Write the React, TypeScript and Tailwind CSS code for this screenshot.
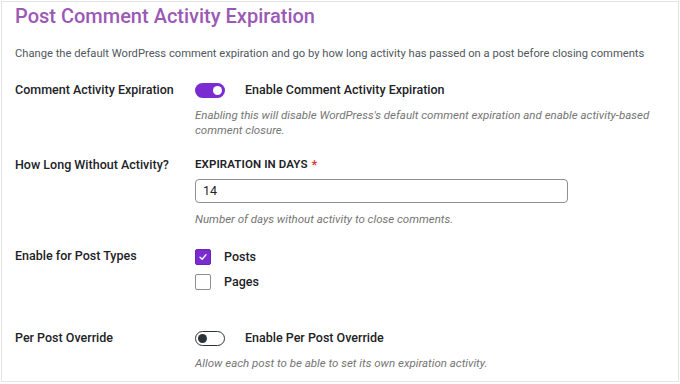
import React from "react";

function Toggle({ on }: { on: boolean }) {
  return on ? (
    <div className="w-[30px] h-[15px] rounded-full bg-[#7b2cd1] flex items-center justify-end pr-[3px]">
      <div className="w-[9px] h-[9px] rounded-full bg-white" />
    </div>
  ) : (
    <div className="w-[30px] h-[15px] rounded-full border border-[#2c3338] bg-white flex items-center pl-[2px]">
      <div className="w-[9px] h-[9px] rounded-full bg-[#2c3338]" />
    </div>
  );
}

function Checkbox({ checked }: { checked: boolean }) {
  return checked ? (
    <div className="w-[16px] h-[16px] rounded-[2px] bg-[#7b2cd1] border border-[#6a25b5] flex items-center justify-center">
      <svg width="10" height="10" viewBox="0 0 10 10" fill="none">
        <path d="M2 5.3 L4.1 7.3 L8 2.8" stroke="white" strokeWidth="1.3" strokeLinecap="round" strokeLinejoin="round" />
      </svg>
    </div>
  ) : (
    <div className="w-[16px] h-[16px] rounded-[2px] bg-white border border-[#8c8f94]" />
  );
}

export default function App() {
  return (
    <div
      className="w-[680px] h-[384px] bg-white overflow-hidden"
      style={{ fontFamily: "Roboto, 'Liberation Sans', sans-serif" }}
    >
      <div className="ml-px mt-px w-[678px] h-[381px] border border-[#e4e4e4] px-[13px]">
        <h1 className="mt-[2px] text-[20px] leading-[24px] font-medium text-[#9b59b6]">
          Post Comment Activity Expiration
        </h1>
        <p className="mt-[16px] text-[11.2px] leading-[20px] text-[#50575e] whitespace-nowrap">
          Change the default WordPress comment expiration and go by how long activity has passed on a post before closing comments
        </p>

        {/* Row 1 */}
        <div className="mt-[16px] flex">
          <div className="w-[180px] text-[12.5px] leading-[20px] font-medium text-[#1d2327]">
            Comment Activity Expiration
          </div>
          <div className="flex-1">
            <div className="h-[20px] flex items-center">
              <Toggle on={true} />
              <span className="ml-[20px] text-[12.5px] leading-[20px] font-medium text-[#1d2327]">
                Enable Comment Activity Expiration
              </span>
            </div>
            <p className="mt-[8px] text-[11.5px] leading-[15px] italic text-[#757575] pr-[10px]">
              Enabling this will disable WordPress's default comment expiration and enable activity-based comment closure.
            </p>
          </div>
        </div>

        {/* Row 2 */}
        <div className="mt-[17px] flex">
          <div className="w-[180px] text-[12.5px] leading-[20px] font-medium text-[#1d2327]">
            How Long Without Activity?
          </div>
          <div className="flex-1">
            <div className="h-[20px] flex items-center text-[11.5px] font-semibold text-[#1d2327] tracking-[0.1px]">
              EXPIRATION IN DAYS <span className="ml-[4px] text-[#d63638] text-[13px]">*</span>
            </div>
            <div className="mt-[4px] w-[373px] h-[24px] rounded-[4px] border border-[#8c8f94] flex items-center px-[7px] text-[12.5px] text-[#1d2327]">
              14
            </div>
            <p className="mt-[9px] text-[11.5px] leading-[15px] italic text-[#757575]">
              Number of days without activity to close comments.
            </p>
          </div>
        </div>

        {/* Row 3 */}
        <div className="mt-[19px] flex">
          <div className="w-[180px] text-[12.5px] leading-[20px] font-medium text-[#1d2327]">
            Enable for Post Types
          </div>
          <div className="flex-1 flex flex-col gap-[5px] pt-[1px]">
            <div className="h-[20px] flex items-center">
              <Checkbox checked={true} />
              <span className="ml-[13px] text-[12.5px] font-medium text-[#1d2327]">Posts</span>
            </div>
            <div className="h-[20px] flex items-center">
              <Checkbox checked={false} />
              <span className="ml-[13px] text-[12.5px] font-medium text-[#1d2327]">Pages</span>
            </div>
          </div>
        </div>

        {/* Row 4 */}
        <div className="mt-[36px] flex">
          <div className="w-[180px] text-[12.5px] leading-[20px] font-medium text-[#1d2327]">
            Per Post Override
          </div>
          <div className="flex-1">
            <div className="h-[20px] flex items-center">
              <Toggle on={false} />
              <span className="ml-[20px] text-[12.5px] leading-[20px] font-medium text-[#1d2327]">
                Enable Per Post Override
              </span>
            </div>
            <p className="mt-[8px] text-[11.5px] leading-[15px] italic text-[#757575]">
              Allow each post to be able to set its own expiration activity.
            </p>
          </div>
        </div>
      </div>
    </div>
  );
}
